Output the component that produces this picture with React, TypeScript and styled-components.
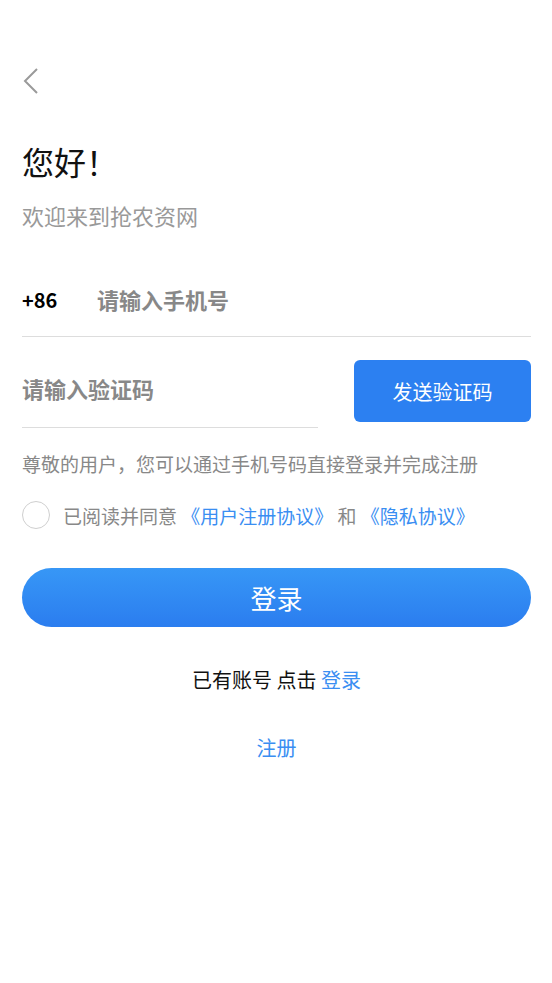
import styled, { createGlobalStyle } from 'styled-components';

const GlobalStyle = createGlobalStyle`
  body {
    margin: 0;
    background: #ffffff;
    font-family: "Noto Sans CJK SC", "Noto Sans", sans-serif;
  }
`;

const Page = styled.div`
  padding: 0 21px 0 22px;
  display: flex;
  flex-direction: column;
`;

const BackButton = styled.button`
  margin-top: 66px;
  width: 30px;
  height: 30px;
  padding: 0;
  border: none;
  background: none;
  display: flex;
  align-items: center;
`;

const Title = styled.h1`
  margin: 45px 0 0;
  font-size: 32px;
  font-weight: 400;
  line-height: 40px;
  color: #111;
`;

const Subtitle = styled.p`
  margin: 19px 0 0;
  font-size: 22px;
  line-height: 30px;
  color: #999;
`;

const InputRow = styled.div<{ $width?: string; $gap: number }>`
  display: flex;
  align-items: center;
  width: ${p => p.$width || '100%'};
  height: 30px;
  padding-bottom: ${p => p.$gap}px;
  border-bottom: 1px solid #dddddd;
`;

const PhoneRow = styled(InputRow)`
  margin-top: 54px;
`;

const Prefix = styled.span`
  width: 75px;
  font-size: 20px;
  font-weight: 700;
  color: #000;
`;

const Placeholder = styled.span`
  font-size: 22px;
  font-weight: 700;
  color: #888;
`;

const CodeLine = styled.div`
  display: flex;
  align-items: flex-end;
  justify-content: space-between;
  margin-top: 23px;
`;

const SendButton = styled.button`
  width: 177px;
  height: 62px;
  margin-bottom: 6px;
  border: none;
  border-radius: 6px;
  background: #2c80f1;
  color: #fff;
  font-family: inherit;
  font-size: 20px;
`;

const Hint = styled.p`
  margin: 21px 0 0;
  font-size: 19px;
  line-height: 30px;
  color: #888;
`;

const AgreeRow = styled.div`
  display: flex;
  align-items: center;
  margin-top: 22px;
  font-size: 19px;
  color: #888;
  white-space: pre;
`;

const Radio = styled.span`
  width: 26px;
  height: 26px;
  border: 1.5px solid #cfcfcf;
  border-radius: 50%;
  margin-right: 13px;
`;

const Link = styled.span`
  color: #3a8ef2;
`;

const LoginButton = styled.button`
  margin-top: 39px;
  height: 59px;
  border: none;
  border-radius: 30px;
  background: linear-gradient(180deg, #3797f6 0%, #2b7def 100%);
  color: #fff;
  font-family: inherit;
  font-size: 26px;
`;

const CenterText = styled.p<{ $top: number }>`
  margin: ${p => p.$top}px 0 0;
  text-align: center;
  font-size: 20px;
  line-height: 30px;
  color: #111;
`;

export default function App() {
  return (
    <>
      <GlobalStyle />
      <Page>
        <BackButton aria-label="back">
          <svg width="18" height="28" viewBox="0 0 18 28">
            <path d="M15 2 L3 14 L15 26" fill="none" stroke="#9a9a9a" strokeWidth="2" />
          </svg>
        </BackButton>
        <Title>您好！</Title>
        <Subtitle>欢迎来到抢农资网</Subtitle>
        <PhoneRow $gap={22}>
          <Prefix>+86</Prefix>
          <Placeholder>请输入手机号</Placeholder>
        </PhoneRow>
        <CodeLine>
          <InputRow $width="296px" $gap={24}>
            <Placeholder>请输入验证码</Placeholder>
          </InputRow>
          <SendButton>发送验证码</SendButton>
        </CodeLine>
        <Hint>尊敬的用户，您可以通过手机号码直接登录并完成注册</Hint>
        <AgreeRow>
          <Radio />
          已阅读并同意 <Link>《用户注册协议》</Link> 和 <Link>《隐私协议》</Link>
        </AgreeRow>
        <LoginButton>登录</LoginButton>
        <CenterText $top={38}>
          已有账号 点击 <Link>登录</Link>
        </CenterText>
        <CenterText $top={38}>
          <Link>注册</Link>
        </CenterText>
      </Page>
    </>
  );
}
